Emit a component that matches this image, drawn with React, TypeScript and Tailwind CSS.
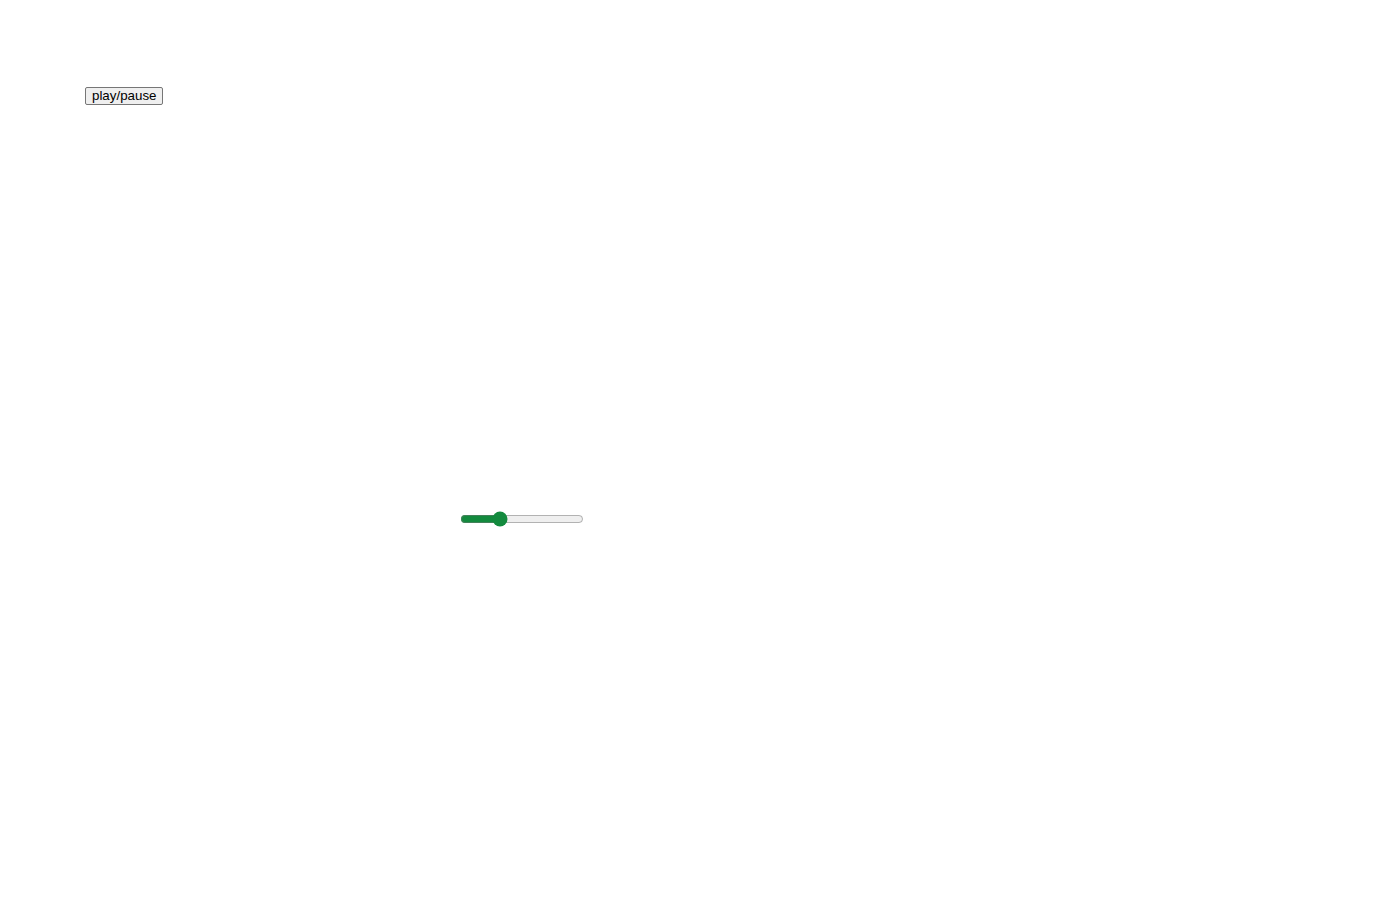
import { useState } from 'react';

export default function App() {
  const [playing, setPlaying] = useState(false);
  const [volume, setVolume] = useState(30);

  return (
    <div className="min-h-screen bg-white font-['Liberation_Sans',Arial,sans-serif] text-black">
      <div className="pl-[85px] pt-[83px]">
        <button
          onClick={() => setPlaying(!playing)}
          className="h-[18px] px-[6px] border border-[#767676] rounded-[2px] bg-[#efefef] hover:bg-[#e5e5e5] text-[13.33px] leading-[16px]"
        >
          play/pause
        </button>
      </div>
      <div className="pl-[460px] pt-[404px]">
        <input
          type="range"
          min={0}
          max={100}
          value={volume}
          onChange={(e) => setVolume(Number(e.target.value))}
          className="w-[124px] m-0 accent-[#138a3e] block"
        />
      </div>
    </div>
  );
}
